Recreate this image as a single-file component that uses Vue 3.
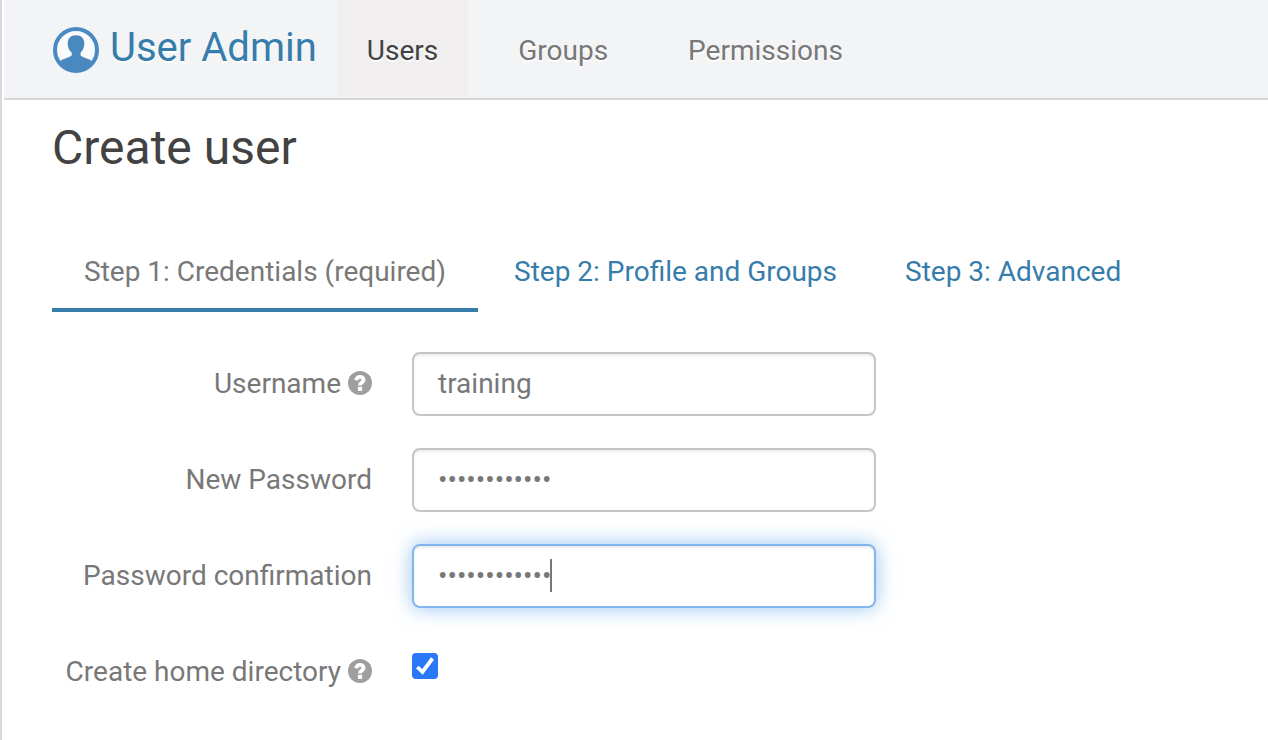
<script setup>
import { ref } from 'vue'

const navItems = [
  { label: 'Users', active: true },
  { label: 'Groups', active: false },
  { label: 'Permissions', active: false },
]
const steps = ['Step 1: Credentials (required)', 'Step 2: Profile and Groups', 'Step 3: Advanced']
const currentStep = ref(0)

const username = ref('training')
const password = ref('training1234')
const confirmation = ref('training1234')
const createHome = ref(true)
</script>

<template>
  <div class="page">
    <header class="navbar">
      <a class="brand" href="#">
        <svg class="brand-icon" viewBox="-1 -1 48 48" aria-hidden="true">
          <circle cx="23" cy="23" r="21" fill="#f9fafb" stroke="#4a89c4" stroke-width="4" />
          <path
            fill="#4a89bf"
            d="M23 8.200C17.600 8.200 14.700 11.500 14.700 16.500C14.700 20.500 16 23.500 18.700 25.500V28.500C16.500 30.500 11 31.500 6.800 34L4.500 34A21 21 0 0 0 41.500 34L39.200 34C35 31.500 29.500 30.500 27.600 28.500V25.500C30 23.500 31.300 20.500 31.300 16.500C31.300 11.500 28.400 8.200 23 8.200Z"
          />
        </svg>
        <span>User Admin</span>
      </a>
      <nav class="nav">
        <a
          v-for="item in navItems"
          :key="item.label"
          href="#"
          class="nav-link"
          :class="{ active: item.active }"
        >{{ item.label }}</a>
      </nav>
    </header>

    <main class="content">
      <h1>Create user</h1>

      <nav class="steps">
        <a
          v-for="(step, i) in steps"
          :key="step"
          href="#"
          class="step"
          :class="{ active: i === currentStep }"
          @click.prevent="currentStep = i"
        >{{ step }}</a>
      </nav>

      <form class="form" @submit.prevent>
        <div class="row">
          <div class="label">
            <label for="username">Username</label>
            <svg class="help" viewBox="0 0 24 24" aria-hidden="true">
              <circle cx="12" cy="12" r="12" fill="#9f9f9f" />
              <path d="M8 9.300C8.700 7 10 5.900 12 5.900C14.200 5.900 15.600 7.200 15.600 8.900C15.600 11.500 12 11.300 12 14.400" fill="none" stroke="#fff" stroke-width="3.800" />
              <path d="M9.900 15.800h4.200v4.200h-4.200z" fill="#fff" />
            </svg>
          </div>
          <div class="control"><input id="username" v-model="username" type="text" class="field" /></div>
        </div>
        <div class="row">
          <div class="label"><label for="password">New Password</label></div>
          <div class="control"><input id="password" v-model="password" type="password" class="field" /></div>
        </div>
        <div class="row">
          <div class="label"><label for="confirmation">Password confirmation</label></div>
          <div class="control">
            <input id="confirmation" v-model="confirmation" type="password" class="field focused" />
            <span class="caret" aria-hidden="true"></span>
          </div>
        </div>
        <div class="row">
          <div class="label">
            <label for="home">Create home directory</label>
            <svg class="help" viewBox="0 0 24 24" aria-hidden="true">
              <circle cx="12" cy="12" r="12" fill="#9f9f9f" />
              <path d="M8 9.300C8.700 7 10 5.900 12 5.900C14.200 5.900 15.600 7.200 15.600 8.900C15.600 11.500 12 11.300 12 14.400" fill="none" stroke="#fff" stroke-width="3.800" />
              <path d="M9.900 15.800h4.200v4.200h-4.200z" fill="#fff" />
            </svg>
          </div>
          <div class="check">
            <input id="home" v-model="createHome" type="checkbox" />
            <svg v-if="createHome" viewBox="0 0 26 26" aria-hidden="true">
              <path d="M5.300 14L10.500 19L20.500 5.500" fill="none" stroke="#fff" stroke-width="3.800" />
            </svg>
          </div>
        </div>
      </form>
    </main>
  </div>
</template>

<style>
body {
  background: #fff;
}
</style>

<style scoped>
.page {
  box-sizing: border-box;
  min-height: 100vh;
  padding-left: 2px;
  border-left: 2px solid #d8d8dd;
  font-family: Roboto, "Liberation Sans", sans-serif;
  font-size: 28px;
  line-height: 40px;
  color: #787878;
}

a {
  text-decoration: none;
}

.navbar {
  display: flex;
  height: 98px;
  padding-left: 48px;
  background: #f3f4f6;
  border-bottom: 2px solid #d5d6da;
  text-shadow: 0 2px 0 #fff;
}

.brand {
  display: flex;
  align-items: center;
  gap: 10px;
  margin-right: 20px;
  padding-bottom: 2px;
  font-size: 40px;
  color: #367dab;
}

.brand-icon {
  width: 48px;
  height: 48px;
  margin-top: 4px;
}

.nav {
  display: flex;
  gap: 20px;
  padding-bottom: 2px;
}

.nav-link {
  display: flex;
  align-items: center;
  padding: 6px 30px 0;
  color: #787878;
}

.nav-link.active {
  background: #f0eeef;
  color: #424242;
}

.content {
  padding: 16px 48px;
}

h1 {
  margin: 0;
  font-size: 48px;
  line-height: 64px;
  font-weight: 400;
  color: #424242;
}

.steps {
  display: flex;
  gap: 4px;
  margin-top: 56px;
}

.step {
  padding: 16px 32px;
  border-bottom: 4px solid transparent;
  color: #367dab;
}

.step.active {
  border-color: #367dab;
  color: #787878;
}

.form {
  display: grid;
  gap: 32px;
  margin-top: 40px;
}

.row {
  display: flex;
  gap: 40px;
  min-height: 64px;
}

.label {
  display: flex;
  flex: 0 0 320px;
  align-items: center;
  justify-content: flex-end;
  gap: 7px;
  height: 64px;
  white-space: nowrap;
}

.help {
  width: 24px;
  height: 24px;
  margin-bottom: 2px;
}

.control {
  position: relative;
  flex: 0 1 464px;
}

.field {
  box-sizing: border-box;
  width: 100%;
  height: 64px;
  padding: 8px 24px 10px;
  border: 2px solid #c5c5c5;
  border-radius: 8px;
  outline: none;
  background: #fff;
  box-shadow: inset 0 2px 2px rgba(0, 0, 0, 0.075);
  font: inherit;
  color: #787878;
}

.field.focused,
.field:focus {
  border-color: #80b7ec;
  box-shadow: inset 0 2px 2px rgba(0, 0, 0, 0.075), 0 0 20px rgba(82, 155, 230, 0.6);
}

.caret {
  position: absolute;
  top: 15px;
  left: 138px;
  width: 2px;
  height: 33px;
  background: #777;
}

.check {
  position: relative;
  width: 26px;
  height: 26px;
  margin-top: 13px;
}

.check input {
  display: block;
  appearance: none;
  width: 26px;
  height: 26px;
  margin: 0;
  border: 2px solid #8a8a8a;
  border-radius: 4px;
}

.check input:checked {
  border-color: #2878f8;
  background: #2878f8;
}

.check svg {
  position: absolute;
  inset: 0;
  pointer-events: none;
}
</style>
